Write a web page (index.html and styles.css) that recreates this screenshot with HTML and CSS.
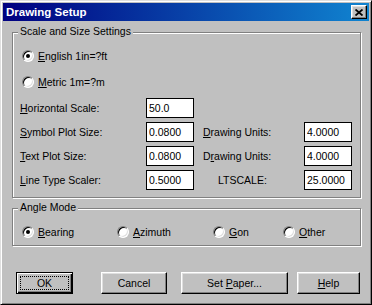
FILE: index.html
```html
<!DOCTYPE html>
<html>
<head>
  <meta charset="utf-8">
  <title>Drawing Setup</title>
  <link rel="stylesheet" href="styles.css">
</head>
<body>

  <div class="window">

    <div class="titlebar">
      <span class="title">Drawing Setup</span>
      <span class="close">
        <svg width="8" height="7" viewBox="0 0 8 7">
          <path d="M0.5 0.5 L7.5 6.5 M7.5 0.5 L0.5 6.5" stroke="#000" stroke-width="1.8" fill="none"/>
        </svg>
      </span>
    </div>

    <div class="client">

      <div class="group scale">
        <span class="group-title">Scale and Size Settings</span>

        <label class="option"><span class="radio checked"></span><span><u>E</u>nglish 1in=?ft</span></label>
        <label class="option"><span class="radio"></span><span><u>M</u>etric 1m=?m</span></label>

        <div class="fields">
          <span class="lbl"><u>H</u>orizontal Scale:</span>
          <input class="box" type="text" value="50.0" readonly>
          <span></span>
          <span></span>

          <span class="lbl"><u>S</u>ymbol Plot Size:</span>
          <input class="box" type="text" value="0.0800" readonly>
          <span class="lbl2"><u>D</u>rawing Units:</span>
          <input class="box" type="text" value="4.0000" readonly>

          <span class="lbl"><u>T</u>ext Plot Size:</span>
          <input class="box" type="text" value="0.0800" readonly>
          <span class="lbl2">D<u>r</u>awing Units:</span>
          <input class="box" type="text" value="4.0000" readonly>

          <span class="lbl"><u>L</u>ine Type Scaler:</span>
          <input class="box" type="text" value="0.5000" readonly>
          <span class="lbl2 ltscale">LTSCALE:</span>
          <input class="box" type="text" value="25.0000" readonly>
        </div>
      </div>

      <div class="group angle">
        <span class="group-title">Angle Mode</span>
        <div class="options">
          <label class="option bearing"><span class="radio checked"></span><span><u>B</u>earing</span></label>
          <label class="option azimuth"><span class="radio"></span><span><u>A</u>zimuth</span></label>
          <label class="option gon"><span class="radio"></span><span><u>G</u>on</span></label>
          <label class="option"><span class="radio"></span><span><u>O</u>ther</span></label>
        </div>
      </div>

      <div class="buttons">
        <button class="btn ok">OK</button>
        <button class="btn cancel">Cancel</button>
        <button class="btn paper">Set <u>P</u>aper...</button>
        <button class="btn help"><u>H</u>elp</button>
      </div>

    </div>
  </div>

</body>
</html>
```

FILE: styles.css
```css
body {
  margin: 0px;
  font-family: 'Liberation Sans', Arial, sans-serif;
  font-size: 10.5px;
  color: #000;
  background-color: #c0c0c0;
}
u {
  text-decoration: underline;
  text-underline-offset: 1px;
}
.window {
  width: 372px;
  height: 305px;
  box-sizing: border-box;
  padding: 2px;
  background-color: #c0c0c0;
  border: 1px solid;
  border-color: #dfdfdf #000 #000 #dfdfdf;
  box-shadow: inset 1px 1px 0 #fff, inset -1px -1px 0 #808080;
}
.titlebar {
  height: 18px;
  display: flex;
  align-items: center;
  justify-content: space-between;
  padding: 0 2px 0 3px;
  background: linear-gradient(to right, #000080, #1084d0);
}
.title {
  color: #fff;
  font-weight: bold;
  font-size: 11.5px;
}
.close {
  width: 16px;
  height: 14px;
  box-sizing: border-box;
  display: flex;
  align-items: center;
  justify-content: center;
  background-color: #c0c0c0;
  border: 1px solid;
  border-color: #fff #000 #000 #fff;
  box-shadow: inset -1px -1px 0 #808080, inset 1px 1px 0 #dfdfdf;
}

/* group boxes */
.group {
  position: relative;
  width: 349px;
  box-sizing: border-box;
  margin-left: 9px;
  padding-left: 7px;
  border: 1px solid #808080;
  box-shadow: 1px 1px 0 #fff, inset 1px 1px 0 #fff;
}
.group-title {
  position: absolute;
  left: 5px;
  top: -8px;
  line-height: 13px;
  padding: 0 2px;
  background-color: #c0c0c0;
}
.scale {
  margin-top: 11px;
  padding-top: 10px;
  padding-bottom: 5px;
}
.angle {
  margin-top: 10px;
  padding-top: 11px;
  padding-bottom: 1px;
}

.option {
  display: flex;
  align-items: center;
  height: 26px;
}
.radio {
  width: 12px;
  height: 12px;
  box-sizing: border-box;
  margin-left: 2px;
  margin-right: 4px;
  border-radius: 50%;
  border: 1px solid;
  border-color: #808080 #fff #fff #808080;
  background-color: #fff;
  box-shadow: inset 1px 1px 0 #000, inset -1px -1px 0 #dfdfdf;
  display: flex;
  align-items: center;
  justify-content: center;
}
.radio.checked::after {
  content: '';
  width: 4px;
  height: 4px;
  border-radius: 50%;
  background-color: #000;
}

.fields {
  margin-top: 1px;
  display: grid;
  grid-template-columns: 126px 48px 110px 48px;
  grid-auto-rows: 24px;
  align-items: center;
}
.lbl2 {
  padding-left: 9px;
}
.ltscale {
  padding-left: 24px;
}
.box {
  width: 48px;
  height: 20px;
  box-sizing: border-box;
  margin: 0;
  padding: 0 2px;
  border: 1px solid #000;
  background-color: #fff;
  font-family: inherit;
  font-size: 10.5px;
  color: #000;
  outline: none;
}

.options {
  display: flex;
}
.options .option {
  height: 24px;
}
.bearing {
  width: 95px;
}
.azimuth {
  width: 96px;
}
.gon {
  width: 70px;
}

/* buttons */
.buttons {
  display: flex;
  margin-top: 26px;
  padding-left: 13px;
}
.btn {
  height: 22px;
  box-sizing: border-box;
  margin: 0;
  padding: 0;
  font-family: inherit;
  font-size: 10.5px;
  color: #000;
  background-color: #c0c0c0;
  border: 1px solid;
  border-color: #fff #000 #000 #fff;
  box-shadow: inset -1px -1px 0 #808080, inset 1px 1px 0 #dfdfdf;
}
.ok {
  width: 57px;
  border-color: #000;
  box-shadow: inset 1px 1px 0 #fff, inset -1px -1px 0 #000, inset -2px -2px 0 #808080;
  outline: 1px dotted #000;
  outline-offset: -5px;
}
.cancel {
  width: 66px;
  margin-left: 28px;
}
.paper {
  width: 107px;
  margin-left: 14px;
}
.help {
  width: 63px;
  margin-left: 9px;
}
```
